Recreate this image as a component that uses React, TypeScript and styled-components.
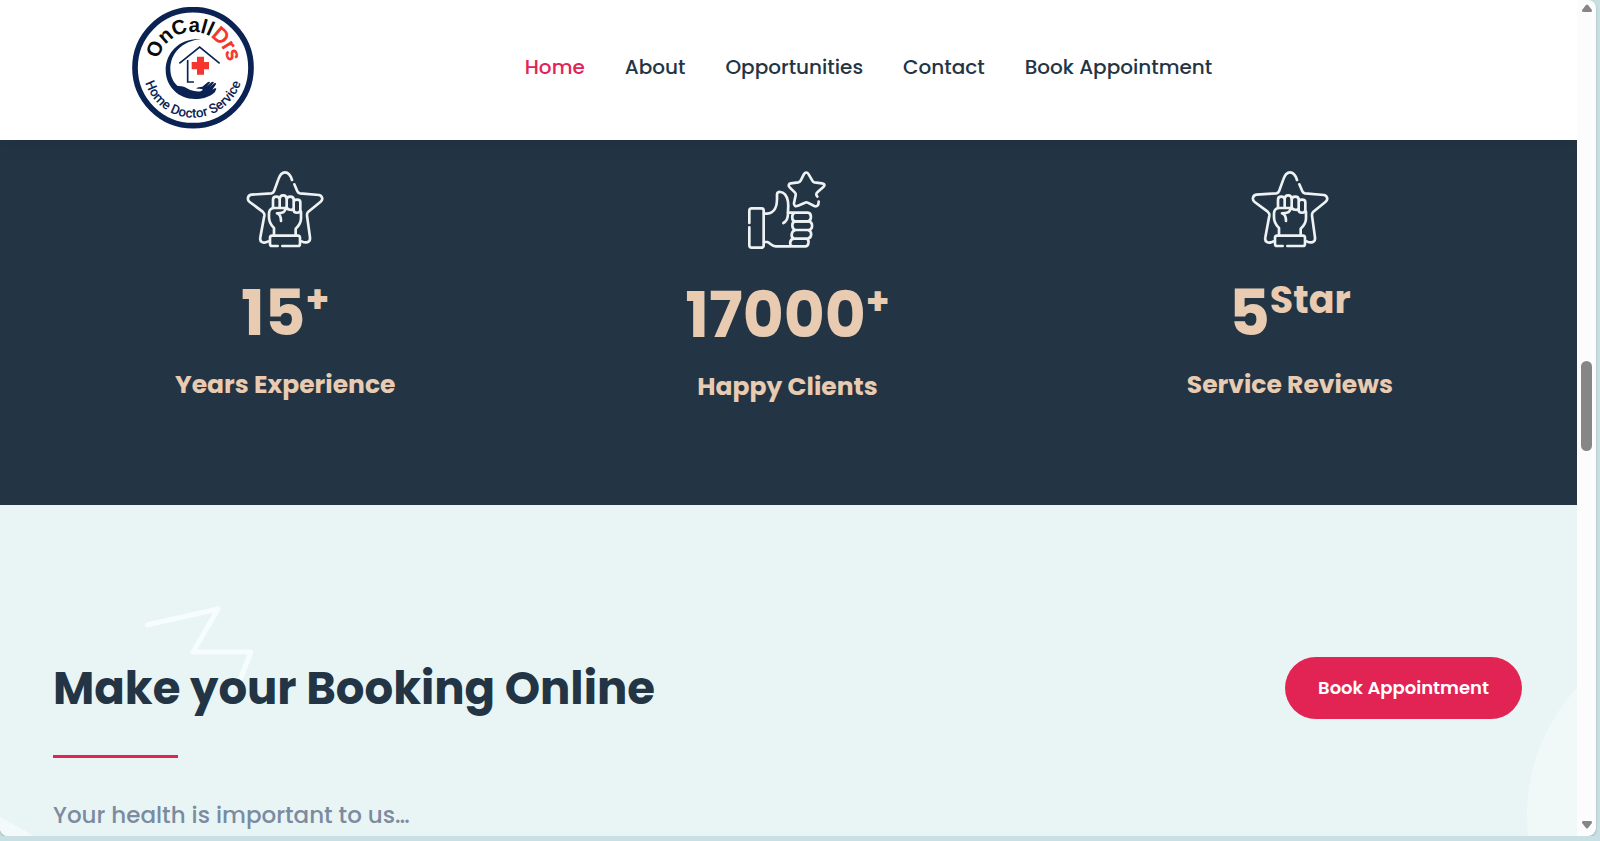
import React from "react";
import styled, { createGlobalStyle } from "styled-components";

const navy = "#233545";
const crimson = "#e22454";
const sand = "#e8cbb0";

const GlobalStyle = createGlobalStyle`
  *, *::before, *::after { box-sizing: border-box; }
  body {
    margin: 0;
    background: #c8dfe3;
    color: ${navy};
    font-family: Poppins, Inter, "Liberation Sans", sans-serif;
  }
`;

const Frame = styled.div`
  display: flex;
  height: calc(100vh - 5px);
  margin-right: 4px;
  overflow: hidden;
  background: #fcfcfc;
  border-radius: 0 8px 8px 8px;
  box-shadow: 0 1px 2px #8fa9ae;
`;

const Page = styled.div`
  display: flex;
  flex-direction: column;
  flex: 1;
  min-width: 0;
  overflow: hidden;
`;

const Header = styled.header`
  position: relative;
  display: grid;
  grid-template-columns: 1fr auto 1fr;
  align-items: center;
  flex-shrink: 0;
  height: 140px;
  padding: 0 132px;
  background: #fff;
  box-shadow: 0 0 20px rgba(0, 0, 0, 0.2);
  z-index: 1;
`;

const HomeLink = styled.a`
  display: block;
  width: 122px;
  height: 122px;
  margin-bottom: 4px;
`;

const Nav = styled.nav`
  display: flex;
  gap: 40px;
  margin: 0 0 6px 160px;
`;

const NavLink = styled.a<{ $active?: boolean }>`
  color: ${(p) => (p.$active ? crimson : navy)};
  font-size: 20px;
  font-weight: 500;
  line-height: 30px;
  text-decoration: none;
  white-space: nowrap;
`;

const Stats = styled.section`
  display: grid;
  grid-template-columns: repeat(3, 1fr);
  flex-shrink: 0;
  padding: 30px 36px 98px 34px;
  background: ${navy};
  color: ${sand};
`;

const Stat = styled.div`
  display: flex;
  flex-direction: column;
  align-items: center;
`;

const StatIcon = styled.svg<{ $tall?: boolean }>`
  width: 80px;
  height: ${(p) => (p.$tall ? 80 : 78)}px;
  margin-bottom: 24px;
  fill: none;
  stroke: #eef2f3;
  stroke-width: 8;
  stroke-linecap: round;
  stroke-linejoin: round;
`;

const StatNumber = styled.div`
  display: flex;
  align-items: flex-start;
  height: 80px;
  font-size: 63px;
  font-weight: 700;
  line-height: 82px;
`;

const Suffix = styled.span`
  font-size: 38px;
  line-height: 56px;
`;

const StatLabel = styled.h3`
  margin: 13px 0 0;
  font-size: 25px;
  font-weight: 700;
  line-height: 40px;
`;

const Booking = styled.section`
  position: relative;
  flex: 1;
  padding: 149px 55px 0 53px;
  background: #e9f5f5;
  overflow: hidden;
`;

const Zigzag = styled.svg`
  position: absolute;
  top: 100px;
  left: 144px;
  width: 112px;
  height: 75px;
`;

const Disc = styled.div`
  position: absolute;
  top: 124px;
  left: calc(100% - 50px);
  width: 372px;
  height: 372px;
  border-radius: 50%;
  background: #f0f9f8;
`;

const Corner = styled.svg`
  position: absolute;
  bottom: 0;
  left: 0;
  width: 34px;
  height: 20px;
`;

const BookingTop = styled.div`
  position: relative;
  display: flex;
  align-items: center;
  justify-content: space-between;
`;

const Title = styled.h2`
  margin: 0;
  padding-top: 3px;
  font-size: 45px;
  font-weight: 700;
  line-height: 64px;
`;

const BookButton = styled.button`
  width: 237px;
  height: 62px;
  border: 0;
  border-radius: 31px;
  background: ${crimson};
  color: #fff;
  font-family: inherit;
  font-size: 18px;
  font-weight: 600;
  white-space: nowrap;
`;

const Rule = styled.hr`
  position: relative;
  width: 125px;
  height: 3px;
  margin: 34px 0 0;
  border: 0;
  background: ${crimson};
`;

const Lead = styled.p`
  position: relative;
  margin: 39px 0 0;
  color: #7b8ba0;
  font-size: 23px;
  font-weight: 500;
  line-height: 36px;
`;

const ScrollTrack = styled.div`
  display: flex;
  flex-direction: column;
  align-items: center;
  width: 19px;
  flex-shrink: 0;
  padding: 4px 0 7px;
`;

const Arrow = styled.svg`
  width: 10px;
  height: 8px;
  fill: #868686;
`;

const ThumbArea = styled.div`
  flex: 1;
  padding-top: 349px;
`;

const Thumb = styled.div`
  width: 11px;
  height: 90px;
  border-radius: 6px;
  background: #868686;
`;

const Logo = () => (
  <svg viewBox="36 22 366 366" width="122" height="122" role="img" aria-label="OnCallDrs Home Doctor Service">
    <defs>
      <path id="upper-arc" d="M112 204A107 107 0 0 1 326 204" />
      <path id="lower-arc" d="M69 204A150 150 0 0 0 369 204" />
    </defs>
    <circle cx="219" cy="204" r="174" fill="#fff" stroke="#0b2352" strokeWidth="17" />
    <text fontFamily="Liberation Sans, sans-serif" fontWeight="700" fontSize="61" textAnchor="middle" fill="#0b0b0b">
      <textPath href="#upper-arc" startOffset="51%">
        OnCall<tspan fill="#f5362f" fontWeight="400" stroke="#f5362f" strokeWidth="3">Drs</tspan>
      </textPath>
    </text>
    <text fontFamily="Roboto, sans-serif" fontWeight="500" fontSize="40" textAnchor="middle" fill="#0b2352">
      <textPath href="#lower-arc" startOffset="50%">Home Doctor Service</textPath>
    </text>
    <path
      fill="#0b2352"
      d="M243 118C180 114 137 158 137 211C137 260 175 298 225 298C253 298 272 290 285 277L289 267C287 264 281 267 277 270L288 254C289 249 284 249 281 252L269 263L281 250C282 245 277 246 274 248L260 261L270 249C270 245 266 246 263 248L247 261C239 262 232 263 228 266C236 269 244 267 249 270C241 279 224 275 211 271C198 263 186 258 173 259C158 246 151 228 151 208C151 162 186 124 243 118Z"
    />
    <path d="M178 191L239 142L299 191M203 181V247H222" fill="none" stroke="#0b2352" strokeWidth="5" />
    <path d="M231 171H252V187H267V209H252V225H231V209H215V187H231Z" fill="#f5362f" />
  </svg>
);

const FistIcon = () => (
  <StatIcon viewBox="45 30 240 234" aria-hidden="true">
    <path d="M186 60C181 43 174 37 165 37C154 37 149 46 145 58L132 94Q130 99 124 100L64 104C53 106 50 119 59 126L98 155Q104 160 103 167L91 232C88 246 100 252 115 244" />
    <path d="M193 73L202 94Q204 99 210 100L267 105C278 108 280 119 271 126L235 155Q230 160 231 167L240 232C242 246 229 251 215 244" />
    <path d="M143 258H126Q120 258 120 251V234Q120 227 126 227H204Q210 227 210 234V251Q210 258 204 258H157" />
    <path d="M132 225V204C120 193 117 184 117 172V161C117 151 122 146 129 144M197 225V206C209 196 213 186 213 175V155" />
    <path d="M129 144V119C129 107 149 107 149 119V143M149 119C149 102 170 102 170 119V141M170 119C170 107 191 107 191 119V146M191 127C191 116 211 116 211 127V150C211 161 191 161 191 150V146" />
    <path d="M129 144H165M170 141C171 151 190 151 191 146M141 160C147 162 153 168 153 183M141 160C153 160 166 158 166 147" />
  </StatIcon>
);

const ThumbIcon = () => (
  <StatIcon $tall viewBox="37 28 240 240" aria-hidden="true">
    <path d="M44 187V150Q44 143 51 143H80Q87 143 87 150V254Q87 261 80 261H51Q44 261 44 254V200" />
    <path d="M88 159H97C122 158 127 133 127 116V101C128 91 143 92 151 101C160 112 162 132 160 151V158C160 173 155 183 146 187M88 244H98C107 247 111 257 123 257H169" />
    <path d="M160 156H219C232 157 232 181 219 182H181C170 181 170 158 181 156" />
    <path d="M181 182H221C236 184 236 206 221 208H183C170 206 170 184 181 182M183 208H219C233 210 233 232 219 234H178C167 230 169 210 183 208M178 234H215C225 236 223 256 213 257H174C163 255 164 236 178 234" />
    <path d="M248 108L245 103Q244 98 248 95L266 79C272 73 270 69 262 68L239 65Q235 64 233 60L222 41C217 33 211 34 207 42L198 60Q196 64 191 65L168 68C162 69 160 75 165 80L181 96Q184 99 183 104L178 127C177 136 183 139 190 135L211 126Q215 124 219 126L239 136C247 139 252 134 252 123" />
  </StatIcon>
);

const stats = [
  { value: "15", suffix: "+", label: "Years Experience", icon: <FistIcon /> },
  { value: "17000", suffix: "+", label: "Happy Clients", icon: <ThumbIcon /> },
  { value: "5", suffix: "Star", label: "Service Reviews", icon: <FistIcon /> },
];

const links = ["Home", "About", "Opportunities", "Contact", "Book Appointment"];

export default function App() {
  return (
    <>
      <GlobalStyle />
      <Frame>
        <Page>
          <Header>
            <HomeLink href="#home">
              <Logo />
            </HomeLink>
            <Nav>
              {links.map((name, i) => (
                <NavLink key={name} href="#" $active={i === 0}>
                  {name}
                </NavLink>
              ))}
            </Nav>
          </Header>
          <Stats>
            {stats.map((s) => (
              <Stat key={s.label}>
                {s.icon}
                <StatNumber>
                  {s.value}
                  <Suffix>{s.suffix}</Suffix>
                </StatNumber>
                <StatLabel>{s.label}</StatLabel>
              </Stat>
            ))}
          </Stats>
          <Booking>
            <Disc />
            <Corner viewBox="0 0 34 20" aria-hidden="true">
              <path d="M0 1L34 20H0Z" fill="#f4fafa" />
            </Corner>
            <Zigzag viewBox="0 0 112 75" aria-hidden="true">
              <path
                d="M3 20L74 4L49 47H107L96 75"
                fill="none"
                stroke="#f7fcfc"
                strokeWidth="5"
                strokeLinecap="round"
                strokeLinejoin="round"
              />
            </Zigzag>
            <BookingTop>
              <Title>Make your Booking Online</Title>
              <BookButton type="button">Book Appointment</BookButton>
            </BookingTop>
            <Rule />
            <Lead>Your health is important to us…</Lead>
          </Booking>
        </Page>
        <ScrollTrack aria-hidden="true">
          <Arrow viewBox="0 0 10 8">
            <path d="M4 1Q5 0 6 1L10 6Q10 8 9 8H1Q0 8 0 6Z" />
          </Arrow>
          <ThumbArea>
            <Thumb />
          </ThumbArea>
          <Arrow viewBox="0 0 10 8">
            <path d="M4 7Q5 8 6 7L10 2Q10 0 9 0H1Q0 0 0 2Z" />
          </Arrow>
        </ScrollTrack>
      </Frame>
    </>
  );
}
